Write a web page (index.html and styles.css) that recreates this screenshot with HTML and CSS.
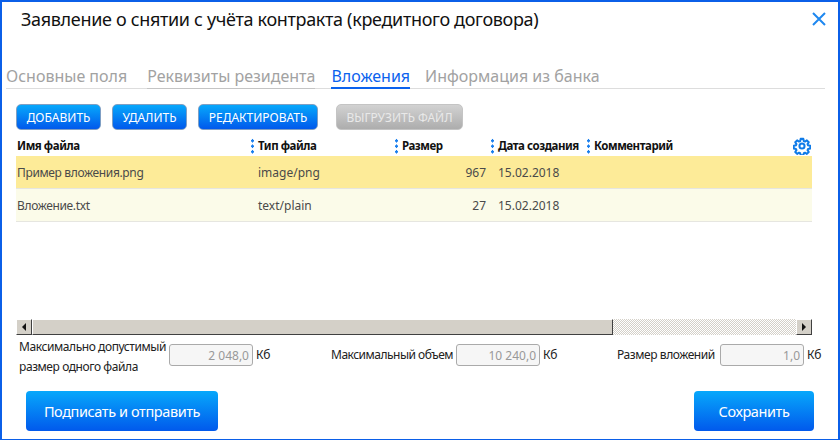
FILE: index.html
```html
<!DOCTYPE html>
<html lang="ru">
<head>
    <meta charset="UTF-8">
    <title>Вложения</title>
    <link rel="stylesheet" href="styles.css">
</head>
<body>
    <div class="dialog">
        <div class="title-row">
            <h1>Заявление о снятии с учёта контракта (кредитного договора)</h1>
            <svg class="close" width="16" height="16" viewBox="0 0 16 16">
                <path d="M2 2 L14 14 M14 2 L2 14" stroke="#1e88f0" stroke-width="2" fill="none"/>
            </svg>
        </div>

        <div class="tabs">
            <span class="tab">Основные поля</span>
            <span class="tab tab-line">Реквизиты резидента</span>
            <span class="tab tab-active">Вложения</span>
            <span class="tab">Информация из банка</span>
        </div>

        <div class="toolbar">
            <button class="tool w-add">ДОБАВИТЬ</button>
            <button class="tool w-del">УДАЛИТЬ</button>
            <button class="tool w-edit">РЕДАКТИРОВАТЬ</button>
            <button class="tool w-load" disabled>ВЫГРУЗИТЬ ФАЙЛ</button>
        </div>

        <div class="table">
            <div class="row head">
                <div class="cell first">Имя файла</div>
                <div class="cell dots">Тип файла</div>
                <div class="cell dots">Размер</div>
                <div class="cell dots">Дата создания</div>
                <div class="cell dots">Комментарий
                    <svg class="gear" width="18" height="18" viewBox="0 0 24 24">
                        <path d="M10.2 2.5h3.6l.6 2.9 1.6.7 2.5-1.6 2.5 2.5-1.6 2.5.7 1.6 2.9.6v3.6l-2.9.6-.7 1.6 1.6 2.5-2.5 2.5-2.5-1.6-1.6.7-.6 2.9h-3.6l-.6-2.9-1.6-.7-2.5 1.6-2.5-2.5 1.6-2.5-.7-1.6-2.9-.6v-3.6l2.9-.6.7-1.6-1.6-2.5 2.5-2.5 2.5 1.6 1.6-.7z" fill="none" stroke="#0f7be8" stroke-width="2.7" stroke-linejoin="round"/>
                        <circle cx="12" cy="12" r="3.4" fill="none" stroke="#0f7be8" stroke-width="2.7"/>
                    </svg>
                </div>
            </div>
            <div class="row item selected">
                <div class="cell first">Пример вложения.png</div>
                <div class="cell">image/png</div>
                <div class="cell num">967</div>
                <div class="cell">15.02.2018</div>
                <div class="cell"></div>
            </div>
            <div class="row item">
                <div class="cell first">Вложение.txt</div>
                <div class="cell">text/plain</div>
                <div class="cell num">27</div>
                <div class="cell">15.02.2018</div>
                <div class="cell"></div>
            </div>
        </div>

        <div class="hscroll">
            <div class="arrow"><i class="tri-left"></i></div>
            <div class="thumb"></div>
            <div class="track"></div>
            <div class="arrow"><i class="tri-right"></i></div>
        </div>

        <div class="limits">
            <div class="limit">
                <label class="two-lines">Максимально допустимый<br>размер одного файла</label>
                <input class="size-box" value="2 048,0" disabled>
                <span>Кб</span>
            </div>
            <div class="limit">
                <label class="label-total">Максимальный объем</label>
                <input class="size-box" value="10 240,0" disabled>
                <span>Кб</span>
            </div>
            <div class="limit">
                <label class="label-used">Размер вложений</label>
                <input class="size-box" value="1,0" disabled>
                <span>Кб</span>
            </div>
        </div>

        <div class="actions">
            <button class="big sign">Подписать и отправить</button>
            <button class="big save">Сохранить</button>
        </div>
    </div>
</body>
</html>
```

FILE: styles.css
```css
* {
    box-sizing: border-box;
}

body {
    margin: 0;
    font-family: "Noto Sans", Arial, sans-serif;
    color: #222;
    background: white;
}

.dialog {
    width: 840px;
    height: 440px;
    border: 2px solid #0b5fe8;
    border-bottom-width: 1px;
    padding: 0 0 0 14px;
    overflow: hidden;
    background: white;
}

.title-row {
    display: flex;
    justify-content: space-between;
    height: 55px;
    padding: 4px 11px 0 5px;
}

h1 {
    margin: 0;
    font-size: 18px;
    line-height: 26px;
    font-weight: normal;
    letter-spacing: -0.33px;
    color: #111;
}

.close {
    margin-top: 5px;
}

.tabs {
    display: flex;
    width: 819px;
    height: 32px;
    margin-left: -10px;
    border-bottom: 1px solid #ddd;
    font-size: 16px;
    line-height: 30px;
}

.tab {
    color: #a2a2a2;
    height: 32px;
    padding-top: 4px;
    margin-right: 20px;
}

.tab-line {
    margin-right: 16px;
    border-bottom: 1px solid #c4c4c4;
}

.tab-active {
    color: #0b62ee;
    border-bottom: 2px solid #0b62ee;
    margin-right: 15px;
}

.toolbar {
    display: flex;
    gap: 11px;
    margin-top: 15px;
}

.tool {
    height: 26px;
    padding: 0;
    border: 1px solid #7f9fc4;
    border-radius: 5px;
    font-family: inherit;
    font-size: 12px;
    color: white;
    background: linear-gradient(to bottom, #07a8fb, #0159ec);
}

.w-add { width: 85px; }
.w-del { width: 75px; }
.w-edit { width: 120px; margin-right: 7px; }
.w-load {
    width: 127px;
    border-color: #c4c4c4;
    color: #e9e9e9;
    background: linear-gradient(to bottom, #d2d2d2, #adadad);
}

.table {
    width: 796px;
    height: 182px;
    margin-top: 7px;
    font-size: 12px;
}

.row {
    display: grid;
    grid-template-columns: 237px 144px 96px 96px 1fr;
    align-items: center;
}

.head {
    height: 19px;
    padding-bottom: 3px;
    font-size: 11.5px;
    font-weight: bold;
    letter-spacing: -0.45px;
    color: #111;
}

.item {
    height: 33px;
    padding-top: 1px;
    border-bottom: 1px solid #e6e6e0;
    background: #fbfbe9;
    color: #4a4a4a;
}

.selected {
    background: #fdeb98;
}

.cell {
    padding-left: 5px;
    white-space: nowrap;
    position: relative;
}

.first {
    padding-left: 1px;
}

.item .first {
    letter-spacing: -0.35px;
}

.num {
    text-align: right;
    padding-right: 7px;
}

/* three blue dots marking the column resize grip */
.dots::before {
    content: "";
    position: absolute;
    left: -2px;
    top: 0;
    width: 3px;
    height: 16px;
    background: radial-gradient(circle, #1a7fee 1.4px, transparent 1.6px) 0 0 / 3px 5.5px;
}

.gear {
    position: absolute;
    right: 1px;
    top: -1px;
}

.hscroll {
    display: flex;
    width: 796px;
    height: 16px;
    background: #d4d0c8;
}

.arrow {
    display: flex;
    align-items: center;
    justify-content: center;
    width: 16px;
    flex: none;
    background: #d4d0c8;
    border: 1px solid;
    border-color: #fff #404040 #404040 #fff;
}

.thumb {
    width: 581px;
    background: #d4d0c8;
    border: 1px solid;
    border-color: #fff #404040 #404040 #fff;
}

.track {
    flex: 1;
    background: repeating-conic-gradient(#d4d0c8 0 25%, #fff 0 50%) 0 0 / 2px 2px;
}

.tri-left, .tri-right {
    width: 0;
    height: 0;
    border-top: 4px solid transparent;
    border-bottom: 4px solid transparent;
}

.tri-left {
    border-right: 4px solid #111;
}

.tri-right {
    border-left: 4px solid #111;
}

.limits {
    display: grid;
    grid-template-columns: 312px 286px 1fr;
    margin: 9px 0 0 3px;
    height: 47px;
    font-size: 12px;
    color: #222;
}

.limit {
    display: flex;
    align-items: flex-start;
    gap: 3px;
}

.limit label {
    line-height: 22px;
    letter-spacing: -0.42px;
    white-space: nowrap;
}

.limit .two-lines {
    width: 147px;
    margin-top: -7px;
    line-height: 20px;
}

.limit .label-total {
    width: 122px;
    letter-spacing: -0.5px;
}

.limit .label-used {
    width: 100px;
}

.limit span {
    line-height: 22px;
}

.size-box {
    width: 84px;
    height: 22px;
    padding: 0 3px;
    border: 1px solid #aaa;
    border-radius: 3px;
    background: #f6f6f6;
    font-family: inherit;
    font-size: 12px;
    text-align: right;
    color: #999;
}

.actions {
    display: flex;
    justify-content: space-between;
    width: 788px;
    margin: 0 0 0 10px;
}

.big {
    height: 40px;
    padding: 0;
    border: none;
    border-radius: 4px;
    font-family: inherit;
    font-size: 14.5px;
    letter-spacing: -0.4px;
    color: white;
    background: linear-gradient(to bottom, #07a8fb, #0159ec);
}

.sign { width: 192px; }
.save { width: 120px; }
```
